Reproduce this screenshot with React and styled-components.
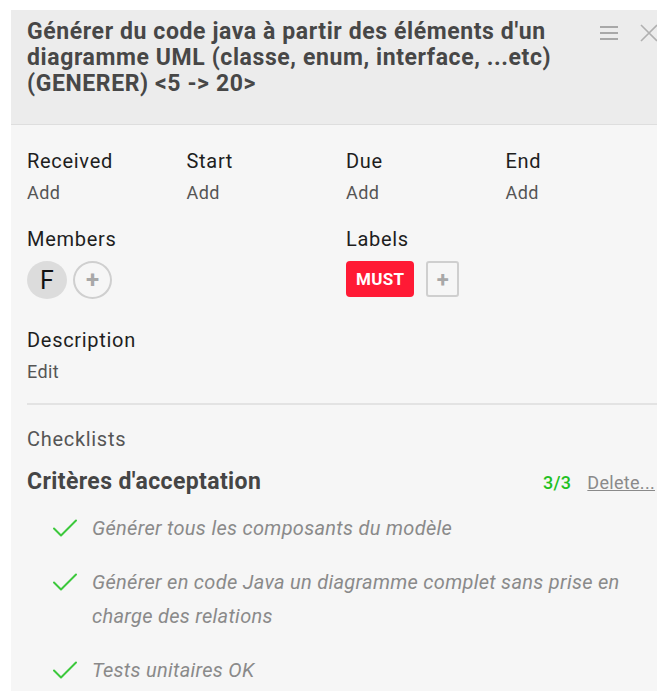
import React from "react";
import styled, { createGlobalStyle } from "styled-components";

const GlobalStyle = createGlobalStyle`
  html, body {
    margin: 0;
    padding: 0;
    background: #ffffff;
    overflow: hidden;
  }
  body {
    font-family: Roboto, "Liberation Sans", Arial, sans-serif;
  }
`;

const dates = ["Received", "Start", "Due", "End"];

const checklist = [
  "Générer tous les composants du modèle",
  "Générer en code Java un diagramme complet sans prise en charge des relations",
  "Tests unitaires OK",
];

const CheckIcon = () => (
  <svg width="26" height="20" viewBox="0 0 26 20" fill="none">
    <path d="M2 10.5 L9 17.5 L24 2.5" stroke="#3cc83c" strokeWidth="2" strokeLinecap="round" strokeLinejoin="round" />
  </svg>
);

const App = () => {
  return (
    <>
      <GlobalStyle />
      <Page>
        <Panel>
          <Header>
            <Title>
              Générer du code java à partir des éléments d'un diagramme UML (classe, enum, interface, ...etc) (GENERER) &lt;5 -&gt; 20&gt;
            </Title>
            <HeaderTools>
              <svg width="18" height="14" viewBox="0 0 18 14">
                <rect x="0" y="0" width="18" height="2" fill="#a8a8a8" />
                <rect x="0" y="6" width="18" height="2" fill="#a8a8a8" />
                <rect x="0" y="12" width="18" height="2" fill="#a8a8a8" />
              </svg>
              <svg width="18" height="18" viewBox="0 0 18 18">
                <path d="M1 1 L17 17 M17 1 L1 17" stroke="#b0b0b0" strokeWidth="1.6" />
              </svg>
            </HeaderTools>
          </Header>

          <Body>
            <DateGrid>
              {dates.map((d) => (
                <Field key={d}>
                  <FieldLabel>{d}</FieldLabel>
                  <FieldAction>Add</FieldAction>
                </Field>
              ))}
            </DateGrid>

            <TwoCols>
              <Field>
                <FieldLabel>Members</FieldLabel>
                <Chips>
                  <Avatar>F</Avatar>
                  <RoundAdd>+</RoundAdd>
                </Chips>
              </Field>
              <Field>
                <FieldLabel>Labels</FieldLabel>
                <Chips>
                  <Badge>MUST</Badge>
                  <SquareAdd>+</SquareAdd>
                </Chips>
              </Field>
            </TwoCols>

            <Field>
              <FieldLabel>Description</FieldLabel>
              <FieldAction>Edit</FieldAction>
            </Field>

            <Divider />

            <SectionTitle>Checklists</SectionTitle>
            <ChecklistHead>
              <ChecklistName>Critères d'acceptation</ChecklistName>
              <ChecklistMeta>
                <Count>3/3</Count>
                <DeleteLink>Delete...</DeleteLink>
              </ChecklistMeta>
            </ChecklistHead>

            <Items>
              {checklist.map((item) => (
                <Item key={item}>
                  <CheckBox>
                    <CheckIcon />
                  </CheckBox>
                  <ItemText>{item}</ItemText>
                </Item>
              ))}
            </Items>
          </Body>
        </Panel>
      </Page>
    </>
  );
};

export default App;

const Page = styled.div`
  padding: 10px 0 0 11px;
  width: 700px;
`;

const Panel = styled.div`
  width: 670px;
  background: #f6f6f6;
  min-height: 700px;
`;

const Header = styled.div`
  display: flex;
  align-items: flex-start;
  background: #ececec;
  border-bottom: 1px solid #dedede;
  padding: 9px 16px 27px 16px;
`;

const Title = styled.h1`
  margin: 0;
  flex: 0 0 555px;
  font-size: 23px;
  line-height: 26px;
  letter-spacing: 0.6px;
  font-weight: 700;
  color: #474747;
`;

const HeaderTools = styled.div`
  display: flex;
  align-items: center;
  gap: 22px;
  margin-left: 18px;
  margin-top: 5px;
`;

const Body = styled.div`
  padding: 24px 16px 0 16px;
`;

const DateGrid = styled.div`
  display: grid;
  grid-template-columns: repeat(4, 1fr);
  margin-bottom: 23px;
`;

const TwoCols = styled.div`
  display: grid;
  grid-template-columns: 1fr 1fr;
  margin-bottom: 29px;
`;

const Field = styled.div`
  display: flex;
  flex-direction: column;
`;

const FieldLabel = styled.div`
  font-size: 20px;
  line-height: 24px;
  letter-spacing: 0.7px;
  color: #1e1e1e;
`;

const FieldAction = styled.div`
  margin-top: 9px;
  font-size: 18px;
  line-height: 22px;
  letter-spacing: 0.4px;
  color: #555555;
`;

const Chips = styled.div`
  display: flex;
  align-items: center;
  gap: 6px;
  margin-top: 10px;
`;

const Avatar = styled.div`
  width: 40px;
  height: 38px;
  border-radius: 50%;
  background: #dcdcdc;
  display: flex;
  align-items: center;
  justify-content: center;
  font-size: 25px;
  color: #111;
`;

const RoundAdd = styled.div`
  width: 35px;
  height: 34px;
  border-radius: 50%;
  border: 2px solid #cfcfcf;
  display: flex;
  align-items: center;
  justify-content: center;
  font-size: 24px;
  font-weight: 700;
  color: #a8a8a8;
`;

const Badge = styled.div`
  height: 36px;
  padding: 0 10px;
  border-radius: 4px;
  background: #ff1a35;
  color: #ffffff;
  font-weight: 700;
  font-size: 17px;
  letter-spacing: 0.3px;
  display: flex;
  align-items: center;
`;

const SquareAdd = styled.div`
  width: 29px;
  height: 32px;
  margin-left: 6px;
  border: 2px solid #cfcfcf;
  border-radius: 3px;
  display: flex;
  align-items: center;
  justify-content: center;
  font-size: 22px;
  font-weight: 700;
  color: #a8a8a8;
`;

const Divider = styled.hr`
  border: none;
  border-top: 2px solid #e3e3e3;
  margin: 20px 0 22px 0;
`;

const SectionTitle = styled.div`
  font-size: 20px;
  line-height: 24px;
  letter-spacing: 0.7px;
  color: #555555;
`;

const ChecklistHead = styled.div`
  display: flex;
  align-items: baseline;
  justify-content: space-between;
  margin-top: 17px;
  padding-right: 10px;
`;

const ChecklistName = styled.div`
  font-size: 23px;
  line-height: 28px;
  letter-spacing: 0.4px;
  font-weight: 700;
  color: #454545;
`;

const ChecklistMeta = styled.div`
  display: flex;
  align-items: baseline;
  gap: 16px;
  font-size: 18px;
  letter-spacing: 0.3px;
`;

const Count = styled.span`
  color: #22c022;
  font-weight: 500;
`;

const DeleteLink = styled.a`
  color: #8a8a8a;
  text-decoration: underline;
`;

const Items = styled.div`
  display: flex;
  flex-direction: column;
  gap: 20px;
  margin-top: 15px;
  padding-left: 25px;
`;

const Item = styled.div`
  display: flex;
  align-items: flex-start;
`;

const CheckBox = styled.div`
  flex: 0 0 40px;
  padding-top: 7px;
`;

const ItemText = styled.div`
  font-style: italic;
  font-size: 20px;
  line-height: 34px;
  letter-spacing: 0.3px;
  color: #8a8a8a;
  max-width: 545px;
`;
